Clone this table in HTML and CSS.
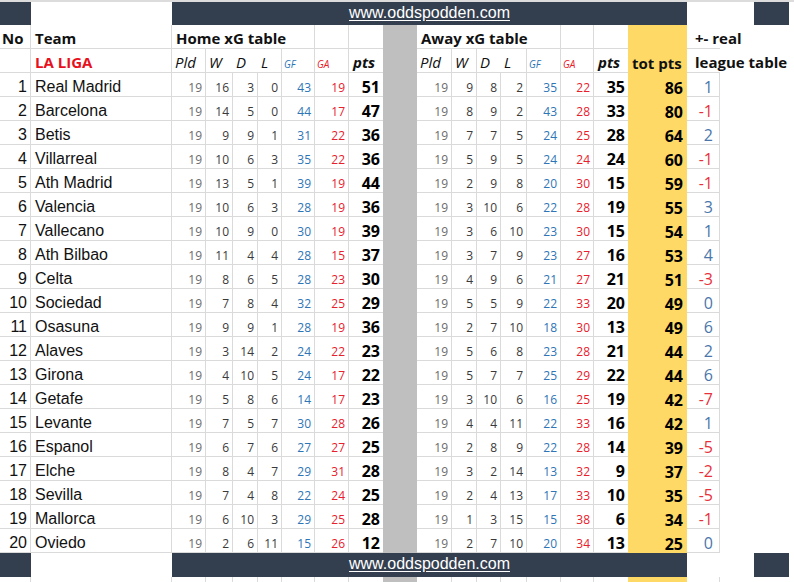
FILE: index.html
```html
<!DOCTYPE html>
<html lang="en">
<head>
<meta charset="utf-8">
<title>La Liga xG table</title>
<link rel="stylesheet" href="styles.css">
</head>
<body>
<div class="sheet">
  <div class="row top">
    <div class="band"></div><div></div>
    <div class="band span16"><span class="url">www.oddspodden.com</span></div>
    <div></div><div></div><div class="band"></div><div></div>
  </div>

  <div class="row">
    <div class="hc no-h">No</div>
    <div class="hc">Team</div>
    <div class="hc span5">Home xG table</div>
    <div class="hc"></div>
    <div class="hc nr"></div>
    <div class="gray"></div>
    <div class="hc span5">Away xG table</div>
    <div class="hc"></div>
    <div class="hc nr"></div>
    <div class="gold"></div>
    <div class="hc nr wide">+- real</div>
    <div></div><div></div><div></div>
  </div>

  <div class="row">
    <div class="hc"></div>
    <div class="hc liga">LA LIGA</div>
    <div class="hc it">Pld</div>
    <div class="hc it nr">W</div>
    <div class="hc it nr">D</div>
    <div class="hc it">L</div>
    <div class="hc sm blue">GF</div>
    <div class="hc sm red">GA</div>
    <div class="hc bi nr">pts</div>
    <div class="gray"></div>
    <div class="hc it">Pld</div>
    <div class="hc it">W</div>
    <div class="hc it nr">D</div>
    <div class="hc it">L</div>
    <div class="hc sm blue">GF</div>
    <div class="hc sm red">GA</div>
    <div class="hc bi nr">pts</div>
    <div class="gold hc nb">tot pts</div>
    <div class="hc nr wide">league table</div>
    <div></div><div></div><div></div>
  </div>

  <div class="row data"><span>1</span><span>Real Madrid</span><span>19</span><span>16</span><span>3</span><span>0</span><span>43</span><span>19</span><span>51</span><span></span><span>19</span><span>9</span><span>8</span><span>2</span><span>35</span><span>22</span><span>35</span><span>86</span><span>1</span><span></span><span></span><span></span></div>
  <div class="row data"><span>2</span><span>Barcelona</span><span>19</span><span>14</span><span>5</span><span>0</span><span>44</span><span>17</span><span>47</span><span></span><span>19</span><span>8</span><span>9</span><span>2</span><span>43</span><span>28</span><span>33</span><span>80</span><span class="neg">-1</span><span></span><span></span><span></span></div>
  <div class="row data"><span>3</span><span>Betis</span><span>19</span><span>9</span><span>9</span><span>1</span><span>31</span><span>22</span><span>36</span><span></span><span>19</span><span>7</span><span>7</span><span>5</span><span>24</span><span>25</span><span>28</span><span>64</span><span>2</span><span></span><span></span><span></span></div>
  <div class="row data"><span>4</span><span>Villarreal</span><span>19</span><span>10</span><span>6</span><span>3</span><span>35</span><span>22</span><span>36</span><span></span><span>19</span><span>5</span><span>9</span><span>5</span><span>24</span><span>24</span><span>24</span><span>60</span><span class="neg">-1</span><span></span><span></span><span></span></div>
  <div class="row data"><span>5</span><span>Ath Madrid</span><span>19</span><span>13</span><span>5</span><span>1</span><span>39</span><span>19</span><span>44</span><span></span><span>19</span><span>2</span><span>9</span><span>8</span><span>20</span><span>30</span><span>15</span><span>59</span><span class="neg">-1</span><span></span><span></span><span></span></div>
  <div class="row data"><span>6</span><span>Valencia</span><span>19</span><span>10</span><span>6</span><span>3</span><span>28</span><span>19</span><span>36</span><span></span><span>19</span><span>3</span><span>10</span><span>6</span><span>22</span><span>28</span><span>19</span><span>55</span><span>3</span><span></span><span></span><span></span></div>
  <div class="row data"><span>7</span><span>Vallecano</span><span>19</span><span>10</span><span>9</span><span>0</span><span>30</span><span>19</span><span>39</span><span></span><span>19</span><span>3</span><span>6</span><span>10</span><span>23</span><span>30</span><span>15</span><span>54</span><span>1</span><span></span><span></span><span></span></div>
  <div class="row data"><span>8</span><span>Ath Bilbao</span><span>19</span><span>11</span><span>4</span><span>4</span><span>28</span><span>15</span><span>37</span><span></span><span>19</span><span>3</span><span>7</span><span>9</span><span>23</span><span>27</span><span>16</span><span>53</span><span>4</span><span></span><span></span><span></span></div>
  <div class="row data"><span>9</span><span>Celta</span><span>19</span><span>8</span><span>6</span><span>5</span><span>28</span><span>23</span><span>30</span><span></span><span>19</span><span>4</span><span>9</span><span>6</span><span>21</span><span>27</span><span>21</span><span>51</span><span class="neg">-3</span><span></span><span></span><span></span></div>
  <div class="row data"><span>10</span><span>Sociedad</span><span>19</span><span>7</span><span>8</span><span>4</span><span>32</span><span>25</span><span>29</span><span></span><span>19</span><span>5</span><span>5</span><span>9</span><span>22</span><span>33</span><span>20</span><span>49</span><span>0</span><span></span><span></span><span></span></div>
  <div class="row data"><span>11</span><span>Osasuna</span><span>19</span><span>9</span><span>9</span><span>1</span><span>28</span><span>19</span><span>36</span><span></span><span>19</span><span>2</span><span>7</span><span>10</span><span>18</span><span>30</span><span>13</span><span>49</span><span>6</span><span></span><span></span><span></span></div>
  <div class="row data"><span>12</span><span>Alaves</span><span>19</span><span>3</span><span>14</span><span>2</span><span>24</span><span>22</span><span>23</span><span></span><span>19</span><span>5</span><span>6</span><span>8</span><span>23</span><span>28</span><span>21</span><span>44</span><span>2</span><span></span><span></span><span></span></div>
  <div class="row data"><span>13</span><span>Girona</span><span>19</span><span>4</span><span>10</span><span>5</span><span>24</span><span>17</span><span>22</span><span></span><span>19</span><span>5</span><span>7</span><span>7</span><span>25</span><span>29</span><span>22</span><span>44</span><span>6</span><span></span><span></span><span></span></div>
  <div class="row data"><span>14</span><span>Getafe</span><span>19</span><span>5</span><span>8</span><span>6</span><span>14</span><span>17</span><span>23</span><span></span><span>19</span><span>3</span><span>10</span><span>6</span><span>16</span><span>25</span><span>19</span><span>42</span><span class="neg">-7</span><span></span><span></span><span></span></div>
  <div class="row data"><span>15</span><span>Levante</span><span>19</span><span>7</span><span>5</span><span>7</span><span>30</span><span>28</span><span>26</span><span></span><span>19</span><span>4</span><span>4</span><span>11</span><span>22</span><span>33</span><span>16</span><span>42</span><span>1</span><span></span><span></span><span></span></div>
  <div class="row data"><span>16</span><span>Espanol</span><span>19</span><span>6</span><span>7</span><span>6</span><span>27</span><span>27</span><span>25</span><span></span><span>19</span><span>2</span><span>8</span><span>9</span><span>22</span><span>28</span><span>14</span><span>39</span><span class="neg">-5</span><span></span><span></span><span></span></div>
  <div class="row data"><span>17</span><span>Elche</span><span>19</span><span>8</span><span>4</span><span>7</span><span>29</span><span>31</span><span>28</span><span></span><span>19</span><span>3</span><span>2</span><span>14</span><span>13</span><span>32</span><span>9</span><span>37</span><span class="neg">-2</span><span></span><span></span><span></span></div>
  <div class="row data"><span>18</span><span>Sevilla</span><span>19</span><span>7</span><span>4</span><span>8</span><span>22</span><span>24</span><span>25</span><span></span><span>19</span><span>2</span><span>4</span><span>13</span><span>17</span><span>33</span><span>10</span><span>35</span><span class="neg">-5</span><span></span><span></span><span></span></div>
  <div class="row data"><span>19</span><span>Mallorca</span><span>19</span><span>6</span><span>10</span><span>3</span><span>29</span><span>25</span><span>28</span><span></span><span>19</span><span>1</span><span>3</span><span>15</span><span>15</span><span>38</span><span>6</span><span>34</span><span class="neg">-1</span><span></span><span></span><span></span></div>
  <div class="row data"><span>20</span><span>Oviedo</span><span>19</span><span>2</span><span>6</span><span>11</span><span>15</span><span>26</span><span>12</span><span></span><span>19</span><span>2</span><span>7</span><span>10</span><span>20</span><span>34</span><span>13</span><span>25</span><span>0</span><span></span><span></span><span></span></div>

  <div class="row foot">
    <div class="band"></div><div></div>
    <div class="band span16"><span class="url">www.oddspodden.com</span></div>
    <div></div><div></div><div class="band"></div><div></div>
  </div>

  <div class="row data"><span></span><span></span><span></span><span></span><span></span><span></span><span></span><span></span><span></span><span></span><span></span><span></span><span></span><span></span><span></span><span></span><span></span><span></span><span></span><span></span><span></span><span></span></div>
</div>
</body>
</html>
```

FILE: styles.css
```css
:root {
  --grid: #dadada;
  --band: #333f4f;
  --gray: #bfbfbf;
  --gold: #ffd966;
  --blue: #2e75b6;
  --red: #e8202c;
}

html, body {
  margin: 0;
  background: #ffffff;
}

body {
  width: 794px;
  height: 582px;
  overflow: hidden;
}

.sheet {
  width: 794px;
  border-top: 2px solid #dcdcdc;
}

.row {
  display: grid;
  grid-template-columns: 31px 141px 34px 27px 25px 24px 33px 34px 34px 34px 35px 25px 24px 26px 34px 33px 34px 59px 33px 34px 35px 5px;
  height: 24px;
}

.row.top {
  height: 23px;
}

.row > div {
  min-width: 0;
  box-sizing: border-box;
}

.band {
  background: var(--band);
}

.span16 {
  grid-column: span 16;
  display: flex;
  justify-content: center;
  align-items: flex-end;
  padding-bottom: 4px;
}

.foot .span16 {
  padding-bottom: 5px;
}

.url {
  font: 16px/1 "Liberation Sans", Arial, sans-serif;
  color: #ffffff;
  text-decoration: underline;
  text-underline-offset: 2px;
}

.span5 {
  grid-column: span 5;
}

.gray {
  background: var(--gray);
}

.gold {
  background: var(--gold);
}

/* header cells */
.hc {
  display: flex;
  align-items: flex-end;
  padding: 0 0 2px 4px;
  border-right: 1px solid var(--grid);
  border-bottom: 1px solid var(--grid);
  font: 700 15px/1 "Open Sans", sans-serif;
  color: #111111;
  white-space: nowrap;
  overflow: visible;
}

.hc.nr {
  border-right: none;
}

.hc.nb {
  border: none;
}

.hc.no-h {
  padding-left: 2px;
}

.hc.wide {
  padding-left: 8px;
}

.hc.liga {
  color: #e8101c;
}

.hc.it {
  font-weight: 400;
  font-style: italic;
  padding-left: 3px;
}

.hc.sm {
  font-size: 10px;
  font-weight: 400;
  font-style: italic;
  padding-left: 2px;
  padding-bottom: 3px;
}

.hc.blue {
  color: var(--blue);
}

.hc.red {
  color: var(--red);
}

.hc.bi {
  font-style: italic;
}

/* data rows */
.data > span {
  display: flex;
  align-items: flex-end;
  justify-content: flex-end;
  box-sizing: border-box;
  min-width: 0;
  padding: 0 3px 2px 0;
  border-right: 1px solid var(--grid);
  border-bottom: 1px solid var(--grid);
  font: 12px/1 "Open Sans", sans-serif;
  color: #3a3a3a;
  white-space: nowrap;
}

.data > span:nth-child(1) {
  font: 16px/1 "Liberation Sans", Arial, sans-serif;
  color: #111111;
  padding-bottom: 1px;
}

.data > span:nth-child(2) {
  justify-content: flex-start;
  padding-left: 4px;
  font: 16px/1 "Liberation Sans", Arial, sans-serif;
  color: #111111;
  padding-bottom: 1px;
}

.data > span:nth-child(3),
.data > span:nth-child(11) {
  color: #6b6b6b;
}

.data > span:nth-child(7),
.data > span:nth-child(15) {
  color: var(--blue);
}

.data > span:nth-child(8),
.data > span:nth-child(16) {
  color: var(--red);
}

.data > span:nth-child(9),
.data > span:nth-child(17) {
  border-right: none;
  font: 700 16px/1 "Open Sans", sans-serif;
  color: #000000;
  padding-bottom: 1px;
}

.data > span:nth-child(10) {
  background: var(--gray);
  border: none;
}

.data > span:nth-child(18) {
  background: var(--gold);
  border: none;
  font: 700 16px/1 "Open Sans", sans-serif;
  color: #000000;
  padding: 0 4px 1px 0;
}

.data > span:nth-child(19) {
  font: 400 16px/1 "Open Sans", sans-serif;
  color: #4a76ab;
  padding: 0 6px 1px 0;
}

.data > span:nth-child(19).neg {
  color: #e8303a;
}

.data > span:nth-child(n+20) {
  border: none;
}
```
